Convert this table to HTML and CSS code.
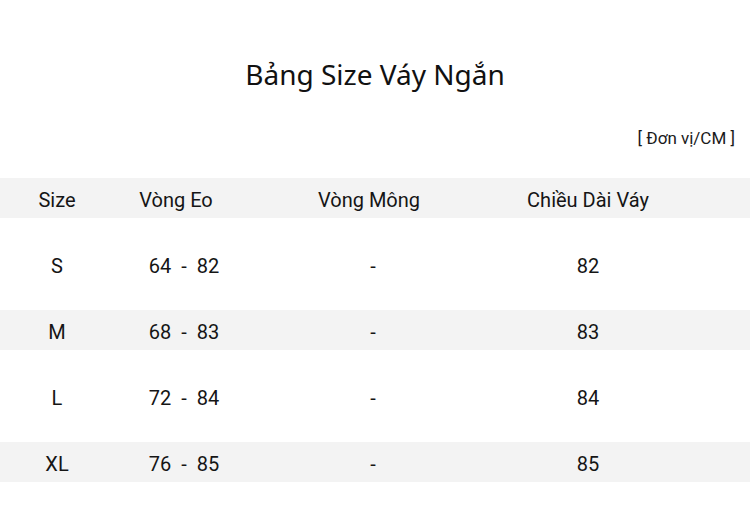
FILE: index.html
```html
<!DOCTYPE html>
<html lang="vi">
<head>
<meta charset="utf-8">
<link rel="stylesheet" href="styles.css">
</head>
<body>
<div class="page">
  <h1 class="title">Bảng Size Váy Ngắn</h1>
  <div class="unit">[ Đơn vị/CM ]</div>
  <div class="table">
    <div class="row head">
      <div class="c1">Size</div><div class="c2">Vòng Eo</div><div class="c3">Vòng Mông</div><div class="c4">Chiều Dài Váy</div><div></div>
    </div>
    <div class="row tall">
      <div class="c1">S</div><div class="c2 v">64 &nbsp;-&nbsp; 82</div><div class="c3 v">-</div><div class="c4">82</div><div></div>
    </div>
    <div class="row band">
      <div class="c1">M</div><div class="c2 v">68 &nbsp;-&nbsp; 83</div><div class="c3 v">-</div><div class="c4">83</div><div></div>
    </div>
    <div class="row tall">
      <div class="c1">L</div><div class="c2 v">72 &nbsp;-&nbsp; 84</div><div class="c3 v">-</div><div class="c4">84</div><div></div>
    </div>
    <div class="row band">
      <div class="c1">XL</div><div class="c2 v">76 &nbsp;-&nbsp; 85</div><div class="c3 v">-</div><div class="c4">85</div><div></div>
    </div>
  </div>
</div>
</body>
</html>
```

FILE: styles.css
```css
html, body {
  margin: 0;
  padding: 0;
  background: #ffffff;
}
.page {
  width: 750px;
  height: 525px;
  font-family: Roboto, "Noto Sans", sans-serif;
  color: #151515;
}
.title {
  margin: 0;
  padding-top: 54px;
  height: 42px;
  line-height: 40px;
  text-align: center;
  font-family: "Noto Sans", "Open Sans", sans-serif;
  font-weight: 400;
  font-size: 28px;
  color: #111;
}
.unit {
  margin-top: 31px;
  text-align: right;
  padding-right: 15px;
  font-size: 17px;
  line-height: 22px;
  color: #1a1a1a;
}
.table {
  margin-top: 29px;
}
.row {
  display: grid;
  grid-template-columns: 114px 124px 262px 176px 1fr;
  align-items: center;
  font-size: 20px;
  text-align: center;
}
.head, .band {
  background: #f3f3f3;
  height: 40px;
}
.head > div, .band > div {
  padding-top: 4px;
}
.tall {
  height: 92px;
}
.tall > div {
  padding-top: 4px;
}
.c2.v {
  padding-left: 16px;
}
.c3.v {
  padding-left: 8px;
}
```
